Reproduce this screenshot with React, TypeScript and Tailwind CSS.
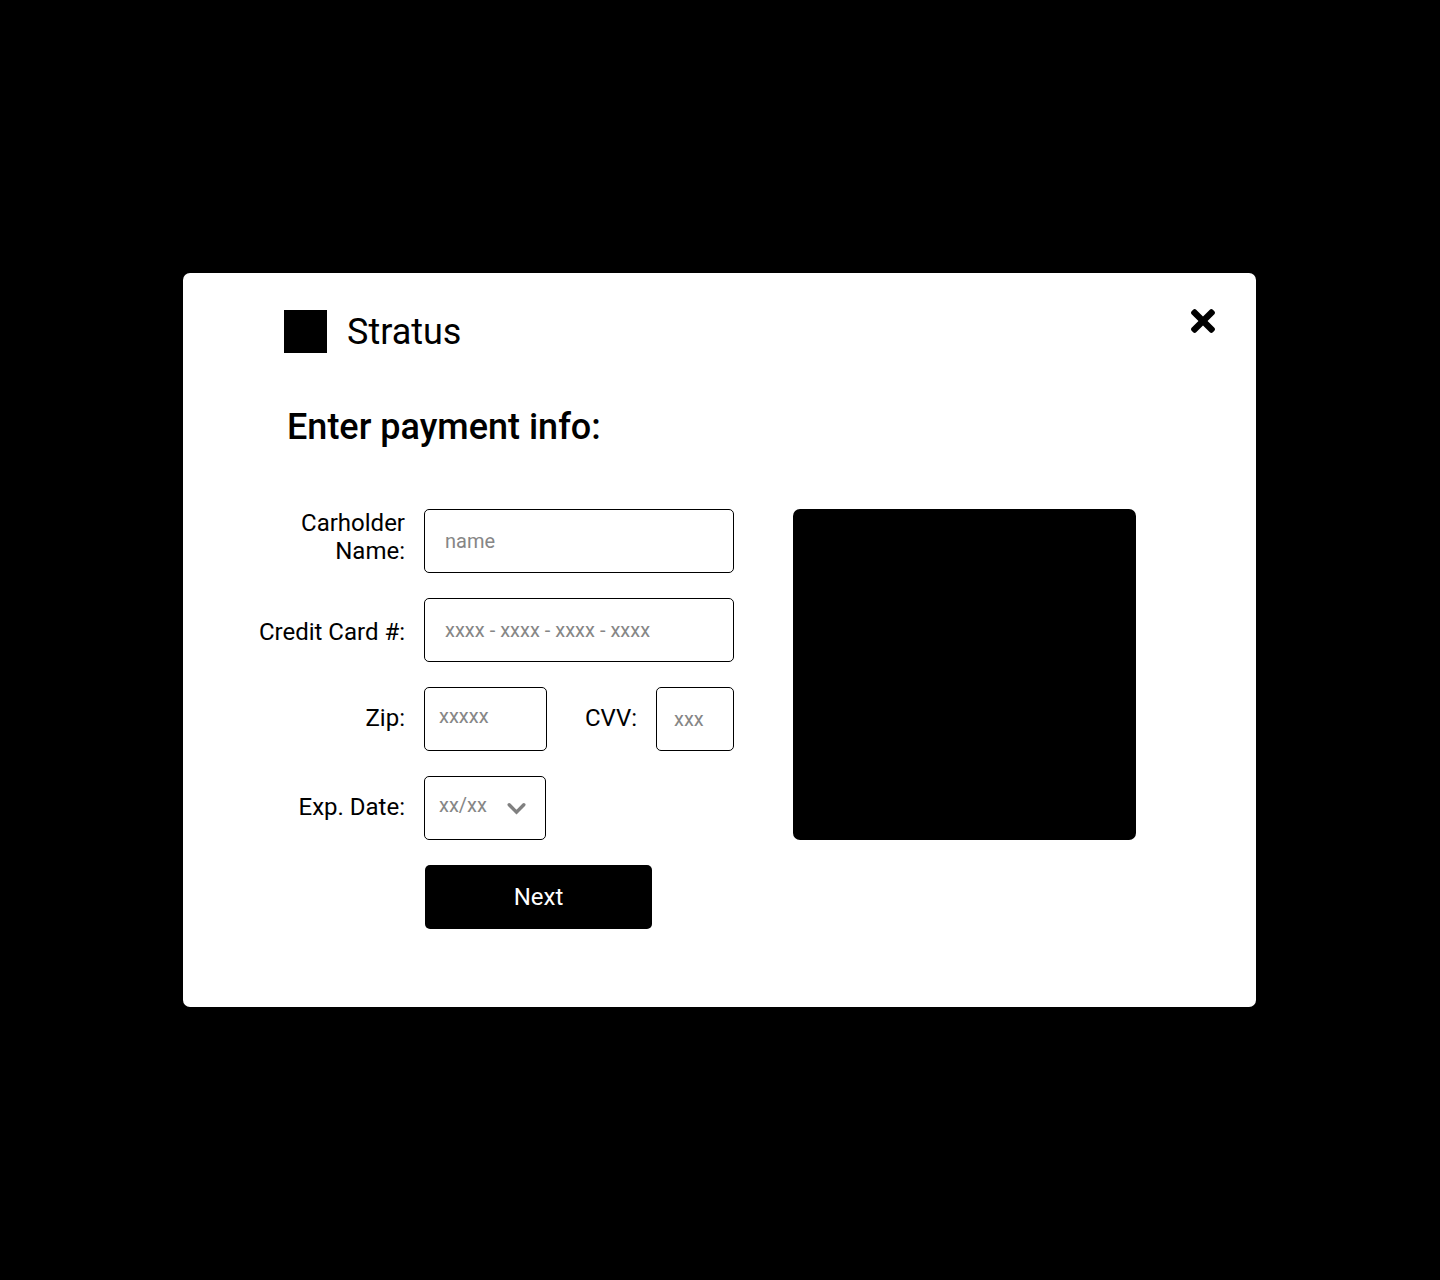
import { useState } from "react";

const labelClass = "text-2xl leading-7 lg:text-right";
const fieldClass =
  "h-16 rounded-[5px] border border-black bg-white text-xl text-black placeholder:text-[#868686] placeholder:opacity-100";

function Brand() {
  return (
    <div className="flex items-center gap-5">
      <div className="size-[43px] bg-black" />
      <span className="text-4xl leading-[42px]">Stratus</span>
    </div>
  );
}

function CloseIcon() {
  return (
    <svg viewBox="0 0 352 352" className="size-6" fill="currentColor" aria-hidden="true">
      <path d="M242.72 176l100.07-100.07c12.28-12.28 12.28-32.19 0-44.48l-22.24-22.24c-12.28-12.28-32.19-12.28-44.48 0L176 109.28 75.93 9.21c-12.28-12.28-32.19-12.28-44.48 0L9.21 31.45c-12.28 12.28-12.28 32.19 0 44.48L109.28 176 9.21 276.07c-12.28 12.28-12.28 32.19 0 44.48l22.24 22.24c12.28 12.28 32.2 12.28 44.48 0L176 242.72l100.07 100.07c12.28 12.28 32.2 12.28 44.48 0l22.24-22.24c12.28-12.28 12.28-32.19 0-44.48L242.72 176z" />
    </svg>
  );
}

function ChevronIcon() {
  return (
    <svg
      viewBox="0 0 19 13"
      className="pointer-events-none absolute top-[26px] right-5 h-[13px] w-[19px] text-[#808080]"
      fill="none"
      stroke="currentColor"
      strokeWidth="3.4"
      strokeLinecap="round"
      aria-hidden="true"
    >
      <path d="M2.2 2.8 9.5 10.1 16.8 2.8" />
    </svg>
  );
}

function PaymentForm() {
  const [expiry, setExpiry] = useState("");

  return (
    <form
      className="grid grid-cols-1 items-center gap-x-[19px] gap-y-[25px] lg:grid-cols-[150px_310px]"
      onSubmit={(event) => event.preventDefault()}
    >
      <label htmlFor="name" className={`${labelClass} self-start`}>
        Carholder Name:
      </label>
      <input id="name" type="text" placeholder="name" className={`${fieldClass} w-full px-5`} />

      <label htmlFor="card" className={`${labelClass} lg:pt-1`}>
        Credit Card #:
      </label>
      <input
        id="card"
        type="text"
        inputMode="numeric"
        placeholder="xxxx - xxxx - xxxx - xxxx"
        className={`${fieldClass} w-full px-5`}
      />

      <label htmlFor="zip" className={`${labelClass} lg:pb-0.5`}>
        Zip:
      </label>
      <div className="flex items-center justify-between">
        <input
          id="zip"
          type="text"
          inputMode="numeric"
          placeholder="xxxxx"
          className={`${fieldClass} w-[123px] px-3.5 pb-1.5`}
        />
        <div className="flex items-center gap-[19px]">
          <label htmlFor="cvv" className={`${labelClass} lg:pb-0.5`}>
            CVV:
          </label>
          <input
            id="cvv"
            type="text"
            inputMode="numeric"
            placeholder="xxx"
            className={`${fieldClass} w-[78px] px-[17px]`}
          />
        </div>
      </div>

      <label htmlFor="expiry" className={`${labelClass} lg:pb-0.5`}>
        Exp. Date:
      </label>
      <div className="relative w-[122px]">
        <select
          id="expiry"
          value={expiry}
          onChange={(event) => setExpiry(event.target.value)}
          className="h-16 w-full appearance-none rounded-[5px] border border-black bg-white px-3.5 pb-1.5 text-xl text-[#868686]"
        >
          <option value="">xx/xx</option>
        </select>
        <ChevronIcon />
      </div>

      <button
        type="submit"
        className="ml-px h-16 w-[227px] rounded-[5px] bg-black text-2xl text-white lg:col-start-2"
      >
        Next
      </button>
    </form>
  );
}

export default function App() {
  return (
    <div className="flex min-h-screen items-center justify-center bg-black pr-px font-['Roboto',sans-serif] text-black">
      <main
        role="dialog"
        aria-labelledby="title"
        className="w-full max-w-[1073px] rounded-[7px] bg-white px-6 pt-9 pb-[78px] lg:pr-[120px] lg:pl-[72px]"
      >
        <header className="flex items-start justify-between lg:-mr-[79px] lg:pl-[29px]">
          <div className="pt-px">
            <Brand />
          </div>
          <button type="button" aria-label="Close">
            <CloseIcon />
          </button>
        </header>
        <h1 id="title" className="mt-[53px] text-4xl leading-[42px] font-medium lg:pl-8">
          Enter payment info:
        </h1>
        <div className="mt-[61px] flex flex-col items-start gap-[59px] lg:flex-row">
          <PaymentForm />
          <div className="h-[331px] w-full rounded-[7px] bg-black lg:w-auto lg:flex-1" />
        </div>
      </main>
    </div>
  );
}
